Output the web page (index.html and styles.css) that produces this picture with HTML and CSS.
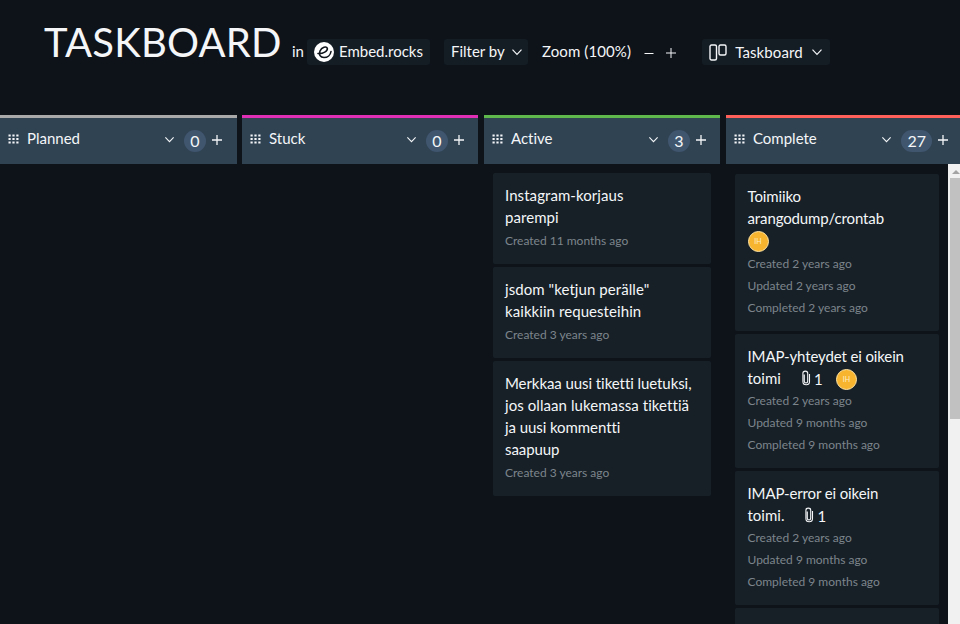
FILE: index.html
```html
<!DOCTYPE html>
<html lang="fi">
<head>
<meta charset="utf-8">
<title>Taskboard</title>
<link rel="stylesheet" href="styles.css">
</head>
<body>
<svg class="defs" width="0" height="0">
  <symbol id="chevron" viewBox="0 0 12 12"><path d="M1.500 3.700 6 8.300l4.500-4.600"/></symbol>
  <symbol id="plus" viewBox="0 0 12 12"><path d="M6 1v10M1 6h10"/></symbol>
  <symbol id="grip" viewBox="0 0 11 10"><path d="M.5 1.500h10M.5 5h10M.5 8.500h10" stroke-dasharray="2.200 1.700" stroke-width="2"/></symbol>
  <symbol id="clip" viewBox="0 0 10 16"><path d="M3.300 4.500v6.800a1.700 1.700 0 0 0 3.400 0V3.200a2.300 2 0 0 0-4.800 0v8.300a3.300 3.300 0 0 0 6.600 0V4"/></symbol>
</svg>
<div class="app">
  <header class="top">
    <h1 class="title">TASKBOARD</h1>
    <span class="in">in</span>
    <div class="chip project">
      <svg class="logo" viewBox="0 0 20 20"><circle cx="10" cy="10" r="10" fill="#fff" stroke="none"/><path d="M4 11.500c5 .5 10-2.500 9.300-5.200-.8-2.300-5.600-1.300-7.300 2.700-1.600 3.700.4 6.500 4 6.500 3.500 0 6.500-2.500 7-6"/></svg>
      <span class="t-embed">Embed.rocks</span>
    </div>
    <div class="chip filter"><span class="t-filter">Filter by</span><svg class="chev"><use href="#chevron"/></svg></div>
    <span class="zoom">Zoom (100%)</span>
    <svg class="zoomer" viewBox="0 0 12 12"><path d="M1.500 6.500h9"/></svg>
    <svg class="zoomer"><use href="#plus"/></svg>
    <div class="chip view">
      <svg class="board" viewBox="0 0 18 17"><rect x="1" y="1" width="6.500" height="15" rx="1.500"/><rect x="10" y="1" width="7" height="10" rx="1.500"/></svg>
      <span class="t-board">Taskboard</span><svg class="chev"><use href="#chevron"/></svg>
    </div>
  </header>
  <main class="columns">
    <section class="column planned">
      <div class="head"><svg class="grip"><use href="#grip"/></svg><span class="name">Planned</span><svg class="chev small"><use href="#chevron"/></svg><span class="count">0</span><svg class="add"><use href="#plus"/></svg></div>
    </section>
    <section class="column stuck">
      <div class="head"><svg class="grip"><use href="#grip"/></svg><span class="name">Stuck</span><svg class="chev small"><use href="#chevron"/></svg><span class="count">0</span><svg class="add"><use href="#plus"/></svg></div>
    </section>
    <section class="column active">
      <div class="head"><svg class="grip"><use href="#grip"/></svg><span class="name">Active</span><svg class="chev small"><use href="#chevron"/></svg><span class="count">3</span><svg class="add"><use href="#plus"/></svg></div>
      <div class="cards">
        <article class="card"><p class="wide">Instagram-korjaus<br>parempi</p><small>Created 11 months ago</small></article>
        <article class="card"><p class="wide">jsdom "ketjun perälle"<br>kaikkiin requesteihin</p><small>Created 3 years ago</small></article>
        <article class="card"><p>Merkkaa uusi tiketti luetuksi,<br><span class="wide">jos ollaan lukemassa tikettiä</span><br>ja uusi kommentti<br>saapuup</p><small>Created 3 years ago</small></article>
      </div>
    </section>
    <section class="column complete">
      <div class="head"><svg class="grip"><use href="#grip"/></svg><span class="name">Complete</span><svg class="chev small"><use href="#chevron"/></svg><span class="count">27</span><svg class="add"><use href="#plus"/></svg></div>
      <div class="scroller">
        <div class="cards">
          <article class="card"><p>Toimiiko<br>arangodump/crontab</p><div class="who"><span class="avatar">IH</span></div><small>Created 2 years ago</small><small>Updated 2 years ago</small><small>Completed 2 years ago</small></article>
          <article class="card"><p>IMAP-yhteydet ei oikein</p><div class="line"><span>toimi</span><svg class="clip"><use href="#clip"/></svg><span class="files">1</span><span class="avatar">IH</span></div><small>Created 2 years ago</small><small>Updated 9 months ago</small><small>Completed 9 months ago</small></article>
          <article class="card"><p>IMAP-error ei oikein</p><div class="line"><span>toimi.</span><svg class="clip"><use href="#clip"/></svg><span class="files">1</span></div><small>Created 2 years ago</small><small>Updated 9 months ago</small><small>Completed 9 months ago</small></article>
          <article class="card"></article>
        </div>
        <div class="bar"><div class="arrow"></div><div class="thumb"></div></div>
      </div>
    </section>
  </main>
</div>
</body>
</html>
```
FILE: styles.css
```css
* { box-sizing: border-box; }
body { margin: 0; background: #0e131a; color: #f4f6f8; font: 15px/22px Lato, "Open Sans", sans-serif; font-variant-ligatures: none; }
.defs { display: block; height: 0; }
.app { width: 960px; height: 624px; overflow: hidden; }
svg { fill: none; stroke: currentColor; stroke-width: 1.2; flex: none; }
span { white-space: nowrap; }
.top { height: 115px; padding-left: 44px; display: flex; align-items: flex-start; }
.title { margin: 17px 0 0; width: 248px; font-size: 40px; line-height: 50px; font-weight: 400; letter-spacing: .2px; }
.in { margin-top: 40px; width: 15px; }
.chip { height: 26px; margin-top: 39px; background: #141c24; border-radius: 3px; display: flex; align-items: center; }
.project { width: 123px; padding: 0 0 1px 7px; gap: 5px; }
.t-embed, .t-filter { margin-top: -1px; }
.logo { width: 20px; height: 20px; stroke: #10151c; stroke-width: 1.6; stroke-linecap: round; }
.filter { width: 84px; margin-left: 14px; padding: 0 5px 1px 7px; justify-content: space-between; }
.chev { width: 12px; height: 12px; }
.zoom { margin: 40px 0 0 14px; width: 101px; letter-spacing: .1px; }
.zoomer { width: 12px; height: 12px; margin-top: 47px; margin-right: 10px; stroke-width: 1; }
.view { width: 128px; margin-left: 15px; padding: 0 7px; justify-content: space-between; }
.t-board { letter-spacing: .1px; }
.board { width: 18px; height: 17px; stroke-width: 1.4; }
.columns { display: grid; grid-template-columns: repeat(4, 242px); height: 509px; }
.column { margin-right: 6px; }
.planned { margin-right: 5px; }
.head { height: 49px; border-top: 3px solid; background: #304353; display: flex; align-items: center; padding: 0 13px 4px 8px; }
.head > * { color: #f4f6f8; }
.planned .head { border-color: #a9a9a9; padding-right: 14px; }
.stuck .head { border-color: #df2fb4; }
.active .head { border-color: #5fb84c; }
.complete .head { border-color: #ff6059; }
.grip { width: 11px; height: 10px; margin-top: -1px; }
.name { flex: 1; margin: -2px 0 0 8px; }
.small { width: 11px; height: 11px; margin: 1px 9px 0 0; }
.count { min-width: 22px; height: 22px; padding: 0 6px; border-radius: 11px; background: #40566f; text-align: center; margin: 4px 5px 0 0; font-size: 16px; }
.add { width: 12px; height: 12px; margin-top: 2px; stroke-width: 1.3; }
.cards { padding: 9px 9px 0; display: flex; flex-direction: column; gap: 3px; }
.card { flex: none; background: #172027; padding: 11px 12px 12px; border-radius: 2px; min-height: 91px; }
.card p { margin: 0 0 1px; white-space: nowrap; letter-spacing: -.07px; }
.card .wide { letter-spacing: .07px; }
.card small { display: block; position: relative; top: 1px; font-size: 12px; line-height: 22px; color: #7d858c; }
.active .card { padding-bottom: 13px; }
.scroller { display: flex; height: 460px; }
.scroller .cards { width: 222px; padding-top: 10px; }
.scroller .card { padding-left: 12.5px; }
.scroller .card p { letter-spacing: -.12px; }
.scroller small { top: 0; }
.who { height: 23px; display: flex; align-items: center; }
.avatar { width: 21px; height: 21px; border-radius: 50%; background: #f7b52f; border: 1px solid #ffe3a3; font-size: 7px; line-height: 19px; text-align: center; color: #ffeec8; }
.line { height: 22px; display: flex; align-items: center; }
.line > span:first-child { margin-top: -2px; }
.clip { width: 10px; height: 16px; margin: -2px 3px 0 20px; stroke-width: 1.1; }
.files { width: 22px; margin-top: -1px; }
.bar { width: 14px; flex: none; background: #f1f1f1; padding: 1px 0 0 2px; }
.arrow { height: 13px; display: grid; place-items: center; }
.arrow::before { content: ""; border: 4px solid transparent; border-top: 0; border-bottom-color: #a3a3a3; }
.thumb { height: 241px; background: #c1c1c1; }
```
